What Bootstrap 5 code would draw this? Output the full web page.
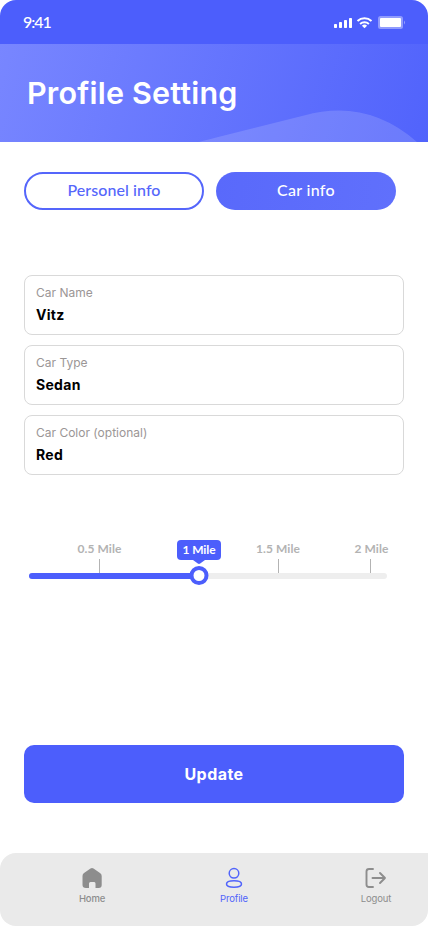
<!DOCTYPE html>
<html lang="en">
<head>
<meta charset="utf-8">
<meta name="viewport" content="width=device-width, initial-scale=1">
<title>Profile Setting</title>
<link href="https://cdn.jsdelivr.net/npm/bootstrap@5.3.0/dist/css/bootstrap.min.css" rel="stylesheet">
<style>
:root{--brand:#4c5efc}
body{font-family:Inter,"Liberation Sans",sans-serif;background:#fff}
.phone{width:428px;height:926px;border-radius:16px 16px 0 0}
.status-bar{height:44px;background:var(--brand);padding:0 23px}
.clock{font:500 16px/44px Lato,sans-serif;letter-spacing:-1px}
.hero{height:98px;background:linear-gradient(106deg,#7886ff 0%,#5163fc 100%)}
.hero-title{font-size:30.5px;font-weight:600;line-height:45px;letter-spacing:.2px;padding:26px 0 0 27px}
.hero-wave{left:0;bottom:0}
.tabs{margin:30px 32px 0 24px;gap:12px}
.tab-pill{height:38px;width:180px;border:2px solid #5566fb;border-radius:19px;padding:0 0 2px;font-family:Lato,sans-serif;font-size:16px;font-weight:500;line-height:24px;letter-spacing:.07px;color:#5566fb}
.tab-pill.on{background:linear-gradient(100deg,#5969fb,#6070fc);border:0;color:#fff;letter-spacing:.3px}
.fields{margin:65px 24px 0;gap:10px}
.field{height:60px;border:1px solid #d9d9d9;border-radius:8px;padding:8px 11px 0}
.field label{font-size:12px;line-height:18px;color:#9b9696}
.field .value{font-size:14px;font-weight:700;line-height:20px;letter-spacing:.3px;margin-top:3px;color:#000}
.scale{display:grid;grid-template-columns:151px 48px 110px 77px;margin:64px 0 0 24px;height:34px;justify-items:center}
.stop{font-family:Lato,sans-serif;font-size:12px;font-weight:700;line-height:20px;letter-spacing:.05px;color:#b3b3b3;text-align:center;white-space:nowrap}
.stop::after{content:"";display:block;width:1px;height:14px;margin:0 auto;background:#b3b3b3}
.stop:last-child::after{transform:translateX(-1px)}
.stop.on{width:44px;height:20px;margin-top:1px;line-height:20px;border-radius:4px;background:var(--brand);color:#fff;letter-spacing:-.1px;position:relative}
.stop.on::after{width:12px;height:4px;background:var(--brand);clip-path:polygon(0 0,100% 0,60% 85%,50% 100%,40% 85%)}
.track{height:6px;width:358px;margin-left:29px;background:#eee;border-radius:3px}
.track-fill{height:6px;background:var(--brand);border-radius:3px}
.thumb{width:19px;height:19px;border:4px solid var(--brand);border-radius:50%;background:#fff;top:-7px;transform:translateX(-50%)}
.update{height:58px;margin:166px 24px 0;border:0;border-radius:10px;background:var(--brand);color:#fff;font-size:16px;font-weight:700;letter-spacing:.45px}
.tabbar{height:73px;background:#eaeaea;border-radius:16px 0 16px 16px;padding:13px 22px 0 62px;gap:82px}
.tabbar a{width:60px;color:#8d8d8d;text-decoration:none;font-size:9.5px;line-height:14px}
.tabbar a span{margin-top:2px;letter-spacing:-.15px}
.tabbar a.on{color:#5164fb}
</style>
<script src="https://cdn.jsdelivr.net/npm/bootstrap@5.3.0/dist/js/bootstrap.bundle.min.js"></script>
</head>
<body>
<div class="phone d-flex flex-column overflow-hidden">
  <div class="status-bar d-flex justify-content-between text-white">
    <span class="clock">9:41</span>
    <svg width="73" height="44" fill="#fff">
      <rect x="2" y="24" width="3" height="4" rx=".7"/><rect x="7" y="22" width="3" height="6" rx=".7"/><rect x="12" y="20" width="3" height="8" rx=".7"/><rect x="17" y="18" width="3" height="10" rx=".7"/>
      <g fill="none" stroke="#fff" stroke-width="2"><path d="M25.500 20.900a10.400 10.400 0 0 1 14 0M28.100 24a6.500 6.500 0 0 1 8.800 0"/></g>
      <path d="M29.900 25.800a3.800 3.800 0 0 1 5.200 0l-2.600 2.400z"/>
      <rect x="46" y="16" width="25" height="13" rx="2.500" fill-opacity=".38"/><rect x="48" y="18" width="21" height="9" rx="1"/><path d="M72 20.500q1.600 2 0 4z" fill-opacity=".5"/>
    </svg>
  </div>
  <header class="hero position-relative text-white">
    <svg class="hero-wave position-absolute" width="428" height="98"><path d="M199 98Q210 95 304 71.500Q367 54 417 98Z" fill="#fff" fill-opacity=".15"/></svg>
    <h1 class="hero-title position-relative m-0">Profile Setting</h1>
  </header>
  <div class="tabs d-flex">
    <button class="tab-pill btn">Personel info</button>
    <button class="tab-pill btn on">Car info</button>
  </div>
  <form class="fields d-flex flex-column">
    <div class="field"><label class="d-block">Car Name</label><div class="value">Vitz</div></div>
    <div class="field"><label class="d-block">Car Type</label><div class="value">Sedan</div></div>
    <div class="field"><label class="d-block">Car Color (optional)</label><div class="value">Red</div></div>
  </form>
  <div class="scale">
    <div class="stop">0.5 Mile</div><div class="stop on">1 Mile</div><div class="stop">1.5 Mile</div><div class="stop">2 Mile</div>
  </div>
  <div class="track position-relative">
    <div class="track-fill" style="width:47.5%"></div>
    <div class="thumb position-absolute" style="left:47.5%"></div>
  </div>
  <button class="update btn">Update</button>
  <nav class="tabbar d-flex mt-auto">
    <a href="#" class="d-flex flex-column align-items-center">
      <svg width="24" height="24" fill="#8d8d8d"><path d="M2.500 10Q2.500 8 4 7L10.500 2.500Q12 1.400 13.500 2.500L20 7Q21.700 8.200 21.700 10V19Q21.700 22 18.700 22H15.500V17.500Q15.500 16 14.200 16H10.500Q9 16 9 17.500V22H6Q2.500 22 2.500 19Z"/></svg>
      <span class="fw-medium">Home</span></a>
    <a href="#" class="on d-flex flex-column align-items-center">
      <svg width="24" height="24" fill="none" stroke="#5164fb" stroke-width="1.500"><circle cx="12" cy="7.300" r="4.800"/><path d="M12 14.800C17 14.800 19.500 15.800 19.500 18S17 21.200 12 21.200 4.500 20.200 4.500 18 7 14.800 12 14.800Z"/></svg>
      <span>Profile</span></a>
    <a href="#" class="d-flex flex-column align-items-center">
      <svg width="24" height="24" fill="none" stroke="#8d8d8d" stroke-width="1.900" stroke-linecap="round" stroke-linejoin="round"><path d="M9 3H5Q2.500 3 2.500 5.500V18.500Q2.500 21 5 21H9M8.500 12H21M16 7l5 5-5 5"/></svg>
      <span>Logout</span></a>
  </nav>
</div>
</body>
</html>
